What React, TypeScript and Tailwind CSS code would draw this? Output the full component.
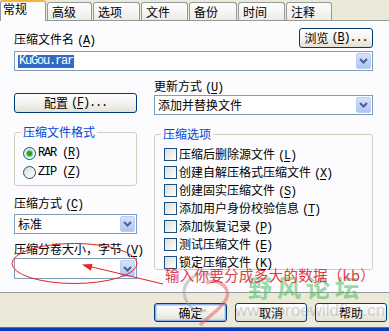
import React from "react";

function K({ k, dots }: { k: string; dots?: boolean }) {
  return (
    <span className="ml-[3px] font-['Liberation_Mono',monospace] tracking-[-1.2px]">
      (<span className="underline underline-offset-[2px]">{k}</span>){dots ? "..." : ""}
    </span>
  );
}

function Chevron() {
  return (
    <svg width="9" height="6" viewBox="0 0 9 6">
      <path d="M1 1 L4.5 4.5 L8 1" fill="none" stroke="#4d6185" strokeWidth="2" />
    </svg>
  );
}

function Combo({ children, className = "" }: { children?: React.ReactNode; className?: string }) {
  return (
    <div className={`flex h-[20px] items-stretch border border-[#7f9db9] bg-white p-[1px] ${className}`}>
      <div className="flex flex-1 items-center overflow-hidden pl-[2px] leading-[14px] whitespace-nowrap">{children}</div>
      <div className="flex w-[15px] items-center justify-center rounded-[2px] border border-[#bccdf5] bg-gradient-to-b from-[#d6e2fd] to-[#afc5f4]">
        <Chevron />
      </div>
    </div>
  );
}

function Btn({ children, className = "" }: { children?: React.ReactNode; className?: string }) {
  return (
    <div
      className={`flex items-center justify-center rounded-[3px] border border-[#003c74] bg-gradient-to-b from-white via-[#f4f3ee] to-[#e3e1d6] leading-[14px] whitespace-nowrap ${className}`}
    >
      {children}
    </div>
  );
}

function Check({ label, k }: { label: string; k: string }) {
  return (
    <div className="flex h-[13px] items-center gap-[2px]">
      <div className="h-[13px] w-[13px] shrink-0 border border-[#1c5180] bg-gradient-to-br from-[#dcdcd7] to-white" />
      <span className="whitespace-nowrap leading-[13px]">
        {label}
        <K k={k} />
      </span>
    </div>
  );
}

function Radio({ label, k, checked }: { label: string; k: string; checked?: boolean }) {
  return (
    <div className="flex h-[13px] items-center gap-[2px]">
      <div className="flex h-[13px] w-[13px] shrink-0 items-center justify-center rounded-full border border-[#1c5180] bg-gradient-to-br from-[#dcdcd7] to-white">
        {checked && <div className="h-[5px] w-[5px] rounded-full bg-[#2aa02a] shadow-[0_0_0_1px_#7fd07f]" />}
      </div>
      <span className="whitespace-nowrap font-['Liberation_Mono',monospace] leading-[13px] tracking-[-1.2px]">
        {label} (<span className="underline underline-offset-[2px]">{k}</span>)
      </span>
    </div>
  );
}

function Group({ title, className = "", children }: { title: string; className?: string; children?: React.ReactNode }) {
  return (
    <div className={`relative rounded-[3px] border border-[#d0d0bf] ${className}`}>
      <span className="absolute left-[6px] top-[-8px] bg-[#fcfcfe] px-[2px] leading-[14px] text-[#0046d5]">{title}</span>
      {children}
    </div>
  );
}

const tabs: [string, number][] = [
  ["高级", 45],
  ["选项", 47],
  ["文件", 47],
  ["备份", 48],
  ["时间", 47],
  ["注释", 46],
];

export default function App() {
  return (
    <div className="relative flex h-[331px] w-[389px] flex-col overflow-hidden bg-[#ece9d8] font-['Noto_Sans_CJK_SC',sans-serif] text-[12px] text-black">
      {/* tabs */}
      <div className="relative z-10 flex h-[20px] items-end gap-[1px]">
        <div className="mb-[-1px] h-[21px] w-[46px] rounded-t-[3px] border-x border-t-[2px] border-x-[#919b9c] border-t-[#f5b53f] bg-[#fcfcfe] pl-[2px] leading-[14px]">
          常规
        </div>
        {tabs.map(([t, w]) => (
          <div
            key={t}
            style={{ width: w }}
            className="h-[18px] rounded-t-[3px] border border-b-0 border-[#919b9c] bg-gradient-to-b from-white to-[#ecebe6] pl-[4px] leading-[18px]"
          >
            {t}
          </div>
        ))}
      </div>

      {/* panel */}
      <div className="h-[273px] border-y border-[#919b9c] bg-[#fcfcfe] pl-[14px] pr-[16px] pt-[7px]">
        <div className="flex h-[20px] items-end justify-between">
          <span className="leading-[14px]">
            压缩文件名
            <K k="A" />
          </span>
          <Btn className="h-[20px] w-[74px]">
            浏览
            <K k="B" dots />
          </Btn>
        </div>
        <Combo className="mt-[3px]">
          <span className="bg-[#316ac5] px-[1px] font-['Liberation_Mono',monospace] leading-[13px] tracking-[-1.2px] text-white">
            KuGou.rar
          </span>
        </Combo>

        <div className="flex gap-[17px]">
          {/* left column */}
          <div className="flex w-[123px] flex-col">
            <Btn className="mt-[22px] h-[20px]">
              配置
              <K k="F" dots />
            </Btn>
            <Group title="压缩文件格式" className="mt-[19px] flex h-[54px] flex-col gap-[6px] pl-[8px] pt-[14px]">
              <Radio label="RAR" k="R" checked />
              <Radio label="ZIP" k="Z" />
            </Group>
            <span className="mt-[10px] leading-[14px]">
              压缩方式
              <K k="C" />
            </span>
            <Combo className="mt-[2px]">
              <span>标准</span>
            </Combo>
            <span className="mt-[8px] leading-[14px] whitespace-nowrap">
              压缩分卷大小，字节
              <K k="V" />
            </span>
            <Combo className="h-[21px]" />
          </div>

          {/* right column */}
          <div className="flex flex-1 flex-col">
            <span className="mt-[8px] leading-[14px]">
              更新方式
              <K k="U" />
            </span>
            <Combo>
              <span>添加并替换文件</span>
            </Combo>
            <Group title="压缩选项" className="mt-[19px] flex h-[136px] flex-col gap-[5px] pl-[9px] pt-[13px]">
              <Check label="压缩后删除源文件" k="L" />
              <Check label="创建自解压格式压缩文件" k="X" />
              <Check label="创建固实压缩文件" k="S" />
              <Check label="添加用户身份校验信息" k="T" />
              <Check label="添加恢复记录" k="P" />
              <Check label="测试压缩文件" k="E" />
              <Check label="锁定压缩文件" k="K" />
            </Group>
          </div>
        </div>
      </div>

      {/* dialog buttons */}
      <div className="flex h-[34px] justify-end gap-[8px] pr-[2px] pt-[10px]">
        <Btn className="h-[19px] w-[73px] shadow-[inset_0_0_0_1px_#8aaef0,inset_0_0_0_2px_#c5d7fa]">确定</Btn>
        <Btn className="h-[19px] w-[72px]">取消</Btn>
        <Btn className="h-[19px] w-[72px]">帮助</Btn>
      </div>

      {/* taskbar strip */}
      <div className="h-[4px] border-t border-[#3b6ee6] bg-[#0b39bf]" />

      {/* watermark + annotations */}
      <svg className="pointer-events-none absolute left-0 top-0" width="389" height="331" viewBox="0 0 389 331">
        <path d="M214 276 C196 268, 178 284, 186 300 C190 310, 200 313, 206 310" fill="none" stroke="#9a9a9a" strokeWidth="3" opacity="0.45" />
        <path d="M206 283 C220 277, 233 290, 225 301 C219 311, 206 318, 200 325" fill="none" stroke="#e05a5a" strokeWidth="3.5" opacity="0.5" />
        <ellipse cx="74.5" cy="263.5" rx="62.5" ry="20" fill="none" stroke="#e02424" strokeWidth="1" />
        <line x1="163" y1="284" x2="90" y2="266.5" stroke="#e02424" strokeWidth="1" />
        <polygon points="82,264.5 90.9,270.7 92.5,263.9" fill="#e02424" />
      </svg>
      <div className="pointer-events-none absolute left-[248px] top-[273px] whitespace-nowrap text-[24px] font-bold leading-[28px] tracking-[5px] text-[#4cbb62] opacity-55">
        野风论坛
      </div>
      <div className="pointer-events-none absolute left-[235px] top-[302px] whitespace-nowrap font-['Liberation_Sans',sans-serif] text-[17px] leading-[18px] text-[#8a8a8a] opacity-35">
        www.proewildfire.cn
      </div>
      <div className="pointer-events-none absolute left-[165px] top-[265px] whitespace-nowrap text-[14.5px] leading-[20px] tracking-[0.3px] text-[#dc3c46]">
        输入你要分成多大的数据（kb）
      </div>
    </div>
  );
}
